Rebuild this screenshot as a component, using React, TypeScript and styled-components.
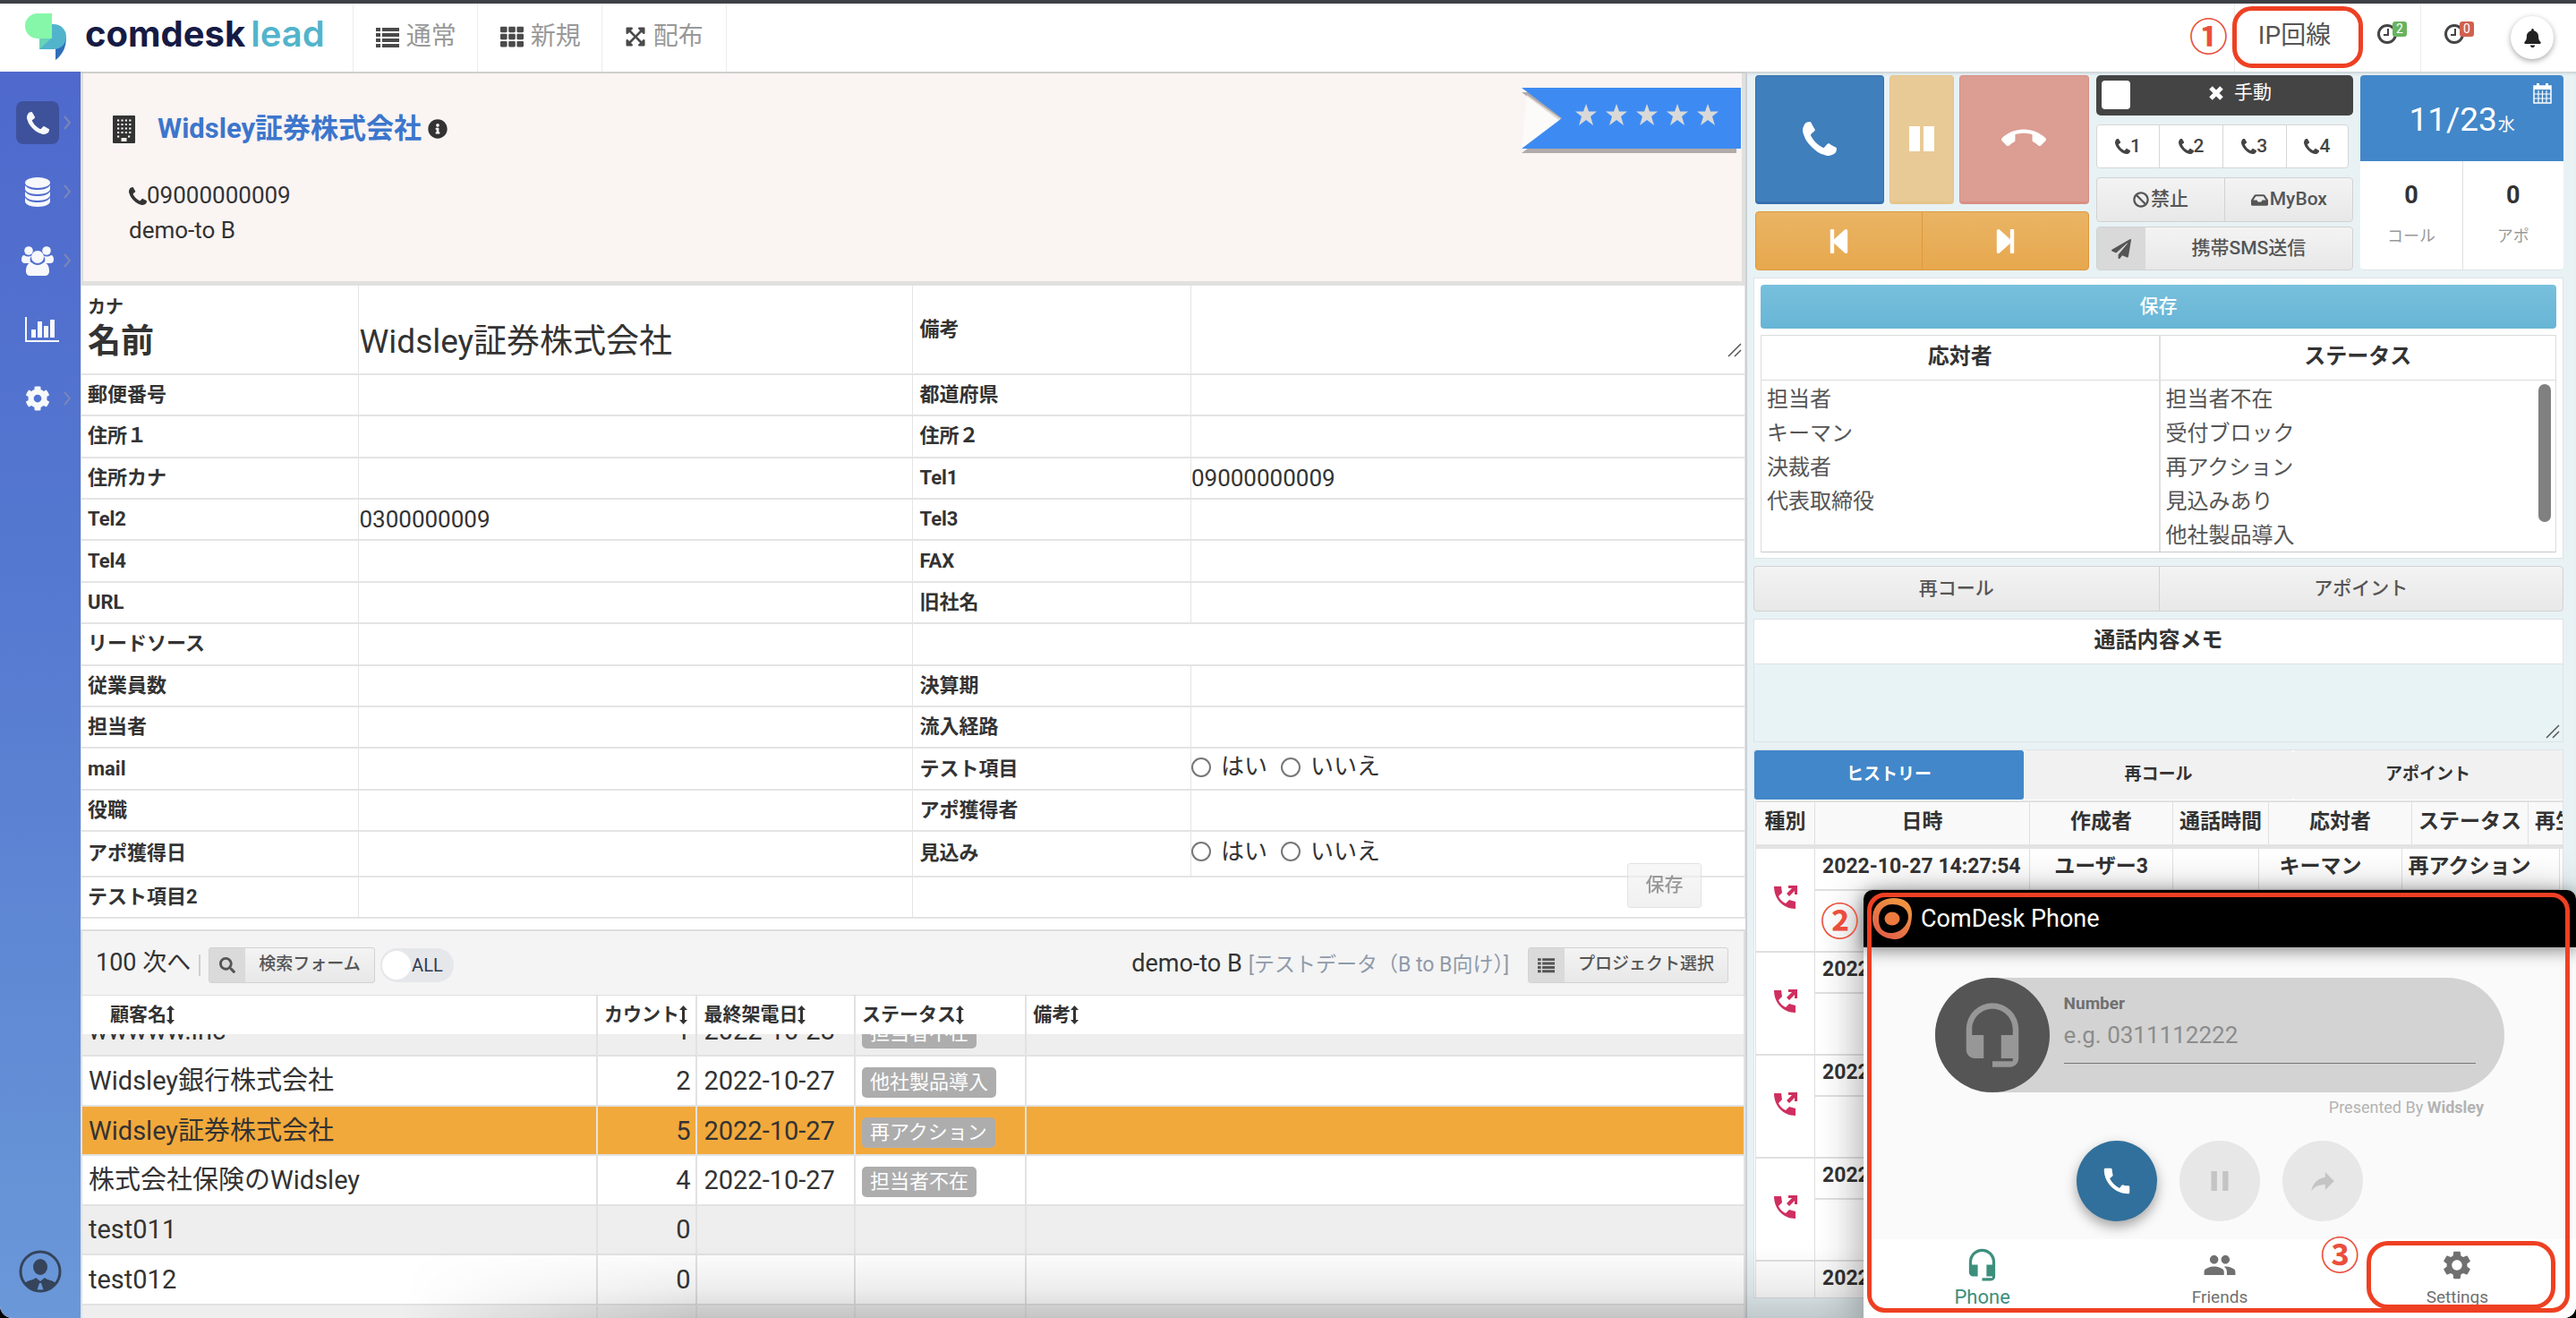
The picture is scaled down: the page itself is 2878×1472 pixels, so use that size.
import React from "react";
import styled, { createGlobalStyle, css } from "styled-components";
import {
  FaBan,
  FaBell,
  FaCog,
  FaExpandArrowsAlt,
  FaInbox,
  FaInfoCircle,
  FaPaperPlane,
  FaSearch,
  FaStepBackward,
  FaStepForward,
  FaTh,
} from "react-icons/fa";
import { MdCall, MdCallEnd, MdGroup, MdHeadsetMic, MdPause, MdSettings } from "react-icons/md";

const GlobalStyle = createGlobalStyle`
  *, *::before, *::after { box-sizing: border-box; }
  html, body { margin: 0; background: #000; }
  body {
    font-family: Roboto, "Noto Sans CJK JP", sans-serif;
    color: #333;
    font-size: 26px;
    line-height: 1.2;
  }
  button, input, select, textarea { font: inherit; color: inherit; margin: 0; border-radius: 0; }
  button { cursor: pointer; padding: 0; border: 0; background: none; }
  a { color: inherit; text-decoration: none; }
  svg { display: block; flex: none; }
`;

/* ---------- shell ---------- */

const Shell = styled.div`
  position: relative;
  display: grid;
  grid-template-rows: 80px minmax(0, 1fr);
  height: 100vh;
  overflow: hidden;
  background: #fff;
  border-radius: 0 0 14px 14px;
`;

const Body = styled.div`
  display: grid;
  grid-template-columns: 90px minmax(0, 465fr) minmax(0, 232fr);
  min-height: 0;
`;

const TopBar = styled.header`
  display: flex;
  align-items: stretch;
  border-top: 4px solid #3f3f46;
  background: #fff;
`;

const Brand = styled.a`
  display: flex;
  align-items: center;
  gap: 20px;
  padding: 0 31px 0 28px;
  border-right: 1px solid #ececec;
`;

const Wordmark = styled.span<{ $light?: boolean }>`
  font-family: Inter, sans-serif;
  font-weight: ${(p) => (p.$light ? 600 : 700)};
  font-size: 40px;
  line-height: 48px;
  color: ${(p) => (p.$light ? "#52b4cc" : "#161b45")};
  margin-bottom: 8px;
`;

const Words = styled.span`
  display: flex;
  gap: 6px;
`;

const TopLink = styled.a`
  display: flex;
  align-items: center;
  gap: 8px;
  width: 139px;
  padding: 0 0 2px 25px;
  border-right: 1px solid #ececec;
  font-size: 28px;
  color: #999;
  svg { color: #4a4a4a; }
`;

const Spacer = styled.div`
  flex: 1;
`;

const LineCell = styled.div`
  position: relative;
  display: flex;
  align-items: center;
  justify-content: center;
  width: 134px;
  padding-bottom: 4px;
  border-left: 1px solid #ececec;
  font-size: 28px;
  color: #555;
`;

const ClockCell = styled.button`
  display: flex;
  align-items: center;
  width: 75px;
  padding: 0 0 8px 26px;
  border-right: 1px solid #ececec;
  color: #444;
  &:last-of-type { border-right: 0; }
`;

const ClockIcon = styled.span`
  position: relative;
  display: block;
`;

const ClockBadge = styled.span<{ $color: string }>`
  position: absolute;
  left: 17px;
  top: -3px;
  width: 16px;
  height: 17px;
  border-radius: 3px;
  background: ${(p) => p.$color};
  color: #fff;
  font-size: 14px;
  line-height: 17px;
  text-align: center;
`;

const BellCell = styled.div`
  display: flex;
  align-items: center;
  padding: 0 25px 0 25px;
`;

const BellButton = styled.button`
  display: grid;
  place-items: center;
  width: 48px;
  height: 48px;
  border-radius: 50%;
  background: #fff;
  color: #222;
  box-shadow: 0 2px 6px rgba(0, 0, 0, 0.35);
`;

/* ---------- side navigation ---------- */

const Side = styled.nav`
  display: flex;
  flex-direction: column;
  padding: 33px 0 28px 18px;
  background: linear-gradient(#4f69cd, #5478d0 40%, #6a98d8);
  color: #f7f8fb;
`;

const SideLink = styled.a<{ $active?: boolean }>`
  display: flex;
  align-items: center;
  gap: 5px;
  height: 48px;
  margin-bottom: 29px;
  > span {
    display: grid;
    place-items: center;
    width: 48px;
    height: 48px;
    border-radius: 8px;
    background: ${(p) => (p.$active ? "#3e529c" : "transparent")};
  }
  > svg { color: #7c87b6; }
`;

const Profile = styled.a`
  margin-top: auto;
  padding-left: 3px;
`;

/* ---------- customer ---------- */

const Main = styled.main`
  display: flex;
  flex-direction: column;
  min-width: 0;
  min-height: 0;
  border-top: 2px solid #cdcfcb;
  background: #fff;
`;

const Customer = styled.section`
  position: relative;
  padding: 40px 0 0 33px;
  height: 237px;
  border: solid #e0e0de;
  border-width: 0 4px 5px 3px;
  background: #faf4f3;
`;

const CustomerTitle = styled.h1`
  display: flex;
  align-items: center;
  margin: 0;
  font-size: 31px;
  font-weight: 700;
  line-height: 44px;
  a { color: #3c76cc; margin: 0 7px 0 25px; }
`;

const CustomerLines = styled.div`
  padding: 33px 0 0 18px;
  font-size: 26px;
  line-height: 39px;
  div { display: flex; align-items: center; }
`;

const Ribbon = styled.div`
  position: absolute;
  top: 16px;
  right: 1px;
`;

const Stars = styled.div`
  position: absolute;
  left: 60px;
  top: 18px;
  display: flex;
  gap: 10px;
  color: #d9d9d9;
`;

/* ---------- form ---------- */

const FormWrap = styled.form`
  position: relative;
`;

const FormTable = styled.table`
  width: 100%;
  height: 707px;
  table-layout: fixed;
  border-collapse: collapse;
`;

const FormRow = styled.tr<{ $h: number }>`
  height: ${(p) => p.$h}px;
`;

const FormTh = styled.th`
  padding: 0 0 0 7px;
  border: solid #e4e4e4;
  border-width: 0 1px 2px 1px;
  text-align: left;
  font-size: 22px;
  font-weight: 700;
  line-height: 30px;
`;

const FormTd = styled.td`
  position: relative;
  padding: 0;
  border: solid #e4e4e4;
  border-width: 0 1px 2px 1px;
`;

const KanaLabel = styled.span`
  display: block;
  font-size: 20px;
  line-height: 28px;
`;

const NameLabel = styled.label`
  display: block;
  font-size: 37px;
  line-height: 50px;
`;

const Field = styled.input<{ $big?: boolean }>`
  display: block;
  width: 100%;
  height: ${(p) => (p.$big ? 60 : 36)}px;
  padding: 0;
  border: 0;
  background: transparent;
  outline: 0;
  font-size: ${(p) => (p.$big ? 37 : 26)}px;
  margin-top: ${(p) => (p.$big ? 20 : 0)}px;
`;

const NoteArea = styled.textarea`
  display: block;
  width: 100%;
  height: 60px;
  padding: 0;
  border: 0;
  background: transparent;
  resize: none;
  outline: 0;
`;

const Choices = styled.div`
  display: flex;
  align-items: center;
  gap: 13px;
  height: 38px;
  padding-bottom: 4px;
  label { display: flex; align-items: center; gap: 11px; }
  label + label { margin-left: 2px; }
  input {
    appearance: none;
    width: 22px;
    height: 22px;
    border: 2px solid #777;
    border-radius: 50%;
    background: #fff;
  }
`;

const Grip = styled.svg`
  position: absolute;
  right: 3px;
  bottom: 3px;
`;

const NoteGrip = styled(Grip)`
  bottom: 18px;
`;

const buttonFace = css`
  border: 1px solid #d2d2d2;
  background: linear-gradient(#f3f3f3, #e8e8e8);
  color: #555;
  font-weight: 500;
`;

const FormSave = styled.button`
  ${buttonFace}
  position: absolute;
  right: 49px;
  bottom: 12px;
  width: 83px;
  height: 50px;
  border-radius: 3px;
  font-size: 21px;
  opacity: 0.6;
`;

/* ---------- customer list ---------- */

const ListPanel = styled.section`
  display: flex;
  flex: 1;
  flex-direction: column;
  min-height: 0;
  margin-top: 12px;
  overflow: hidden;
`;

const ListTools = styled.div`
  display: flex;
  align-items: center;
  flex: none;
  height: 74px;
  padding: 4px 17px 0 15px;
  border: solid #dedede;
  border-width: 2px 2px 1px;
  background: #f4f4f4;
  font-size: 27px;
`;

const PageLinks = styled.span`
  padding-bottom: 4px;
`;

const Divider = styled.span`
  width: 2px;
  height: 24px;
  margin: 0 9px 0 9px;
  background: #cfcfcf;
`;

const ToolButton = styled.button`
  ${buttonFace}
  display: flex;
  align-items: stretch;
  height: 40px;
  border-radius: 3px;
  font-size: 19px;
  > span:first-child {
    display: grid;
    place-items: center;
    width: 40px;
    background: #dadada;
  }
  > span:last-child {
    align-self: center;
    padding: 0 15px;
  }
`;

const AllToggle = styled.label`
  position: relative;
  display: flex;
  align-items: center;
  justify-content: flex-end;
  width: 82px;
  height: 38px;
  margin-left: 6px;
  padding-right: 12px;
  border-radius: 19px;
  background: #e6e7ea;
  color: #2f3a52;
  font-size: 20px;
  input {
    appearance: none;
    position: absolute;
    left: 2px;
    top: 3px;
    width: 32px;
    height: 32px;
    border-radius: 50%;
    background: #fff;
  }
`;

const ProjectName = styled.span`
  padding-bottom: 2px;
  margin-right: 7px;
`;

const ProjectNote = styled.span`
  margin-right: 21px;
  font-size: 23px;
  color: #8f9aaa;
`;

const listTable = css`
  width: 100%;
  flex: none;
  table-layout: fixed;
  border-collapse: collapse;
  th, td { border: solid #e2e2e2; border-width: 0 2px 2px 2px; text-align: left; }
`;

const ListHeadTable = styled.table`
  ${listTable}
  position: relative;
  background: #fff;
  th { height: 43px; padding: 0 0 0 7px; border-bottom: 0; font-size: 21px; font-weight: 700; }
  th:first-child { padding-left: 31px; }
  th > span { display: flex; align-items: center; white-space: nowrap; }
`;

const ListScroll = styled.div`
  flex: 1;
  min-height: 0;
  overflow: hidden;
`;

const ListTable = styled.table`
  ${listTable}
  height: 389px;
  margin-top: -31px;
  font-size: 29px;
  tr { height: 55px; }
  td { padding: 0 6px 0 7px; white-space: nowrap; line-height: 40px; }
  td:nth-child(2) { text-align: right; }
`;

const ListRow = styled.tr<{ $tone: string }>`
  background: ${(p) => p.$tone};
`;

const StatusBadge = styled.span`
  display: inline-block;
  vertical-align: middle;
  height: 34px;
  padding: 0 9px;
  border-radius: 5px;
  background: #adadad;
  color: #fff;
  font-size: 22px;
  line-height: 34px;
`;

/* ---------- call panel ---------- */

const Panel = styled.aside`
  display: flex;
  flex-direction: column;
  gap: 8px;
  min-width: 0;
  min-height: 0;
  padding: 4px 14px 22px 7px;
  border-left: 2px solid #cbd1d7;
  background: #e8f2f5;
  box-shadow: inset 0 4px 4px -3px rgba(0, 0, 0, 0.2);
`;

const Controls = styled.section`
  display: grid;
  grid-template-columns: 373fr 288fr 227fr;
  gap: 8px;
  height: 218px;
  padding-left: 2px;
`;

const Column = styled.div<{ $gap: number }>`
  display: flex;
  flex-direction: column;
  gap: ${(p) => p.$gap}px;
  min-width: 0;
`;

const CallRow = styled.div`
  display: grid;
  grid-template-columns: 2fr 1fr 2fr;
  gap: 6px;
  height: 144px;
`;

const CallButton = styled.button<{ $bg: string; $edge: string }>`
  display: grid;
  place-items: center;
  border-radius: 4px;
  border: 1px solid ${(p) => p.$edge};
  border-bottom-width: 3px;
  background: ${(p) => p.$bg};
  color: #fff;
`;

const Segments = styled.div<{ $h: number; $inset?: boolean }>`
  display: grid;
  grid-auto-flow: column;
  grid-auto-columns: minmax(0, 1fr);
  height: ${(p) => p.$h}px;
  margin-right: ${(p) => (p.$inset ? 5 : 0)}px;
  button { margin-right: -1px; }
  button:last-child { margin-right: 0; border-radius: 0 4px 4px 0; }
  button:first-child { border-radius: 4px 0 0 4px; }
`;

const StepButton = styled.button`
  display: grid;
  place-items: center;
  border: 1px solid #e0983c;
  background: linear-gradient(#e9b464, #e7a84e);
  color: #fff;
`;

const ManualSwitch = styled.label`
  position: relative;
  display: flex;
  align-items: center;
  justify-content: center;
  gap: 12px;
  height: 45px;
  padding: 0 0 6px 35px;
  border-radius: 5px;
  background: #444;
  color: #fff;
  font-size: 21px;
  input {
    appearance: none;
    position: absolute;
    left: 6px;
    top: 6px;
    width: 32px;
    height: 32px;
    border-radius: 4px;
    background: #fff;
  }
`;

const LineButton = styled.button`
  display: flex;
  align-items: center;
  justify-content: center;
  border: 1px solid #d6d6d6;
  background: #fff;
  color: #444;
  font-size: 21px;
  font-weight: 500;
`;

const GreyButton = styled.button`
  ${buttonFace}
  display: flex;
  align-items: center;
  justify-content: center;
  gap: 2px;
  font-size: 21px;
`;

const SmsButton = styled.button`
  ${buttonFace}
  display: flex;
  height: 49px;
  border-radius: 4px;
  font-size: 21px;
  > span { display: grid; place-items: center; height: 100%; }
  > span:first-child { width: 54px; background: #d9d9d9; }
  > span:last-child { flex: 1; }
`;

const DateCard = styled.div`
  display: grid;
  grid-template-rows: 96px 1fr;
  overflow: hidden;
  border-radius: 4px;
  background: #fff;
  border-bottom: 1px solid #dde3e6;
`;

const DateHead = styled.div`
  position: relative;
  display: flex;
  align-items: baseline;
  justify-content: center;
  padding: 28px 0 0 0;
  background: #4287c9;
  color: #fff;
  font-size: 37px;
  line-height: 44px;
  small { font-size: 19px; margin-left: 1px; }
  svg { position: absolute; right: 13px; top: 9px; }
`;

const Counters = styled.dl`
  display: grid;
  grid-template-columns: 1fr 1fr;
  margin: 0;
  text-align: center;
  div { display: flex; flex-direction: column-reverse; justify-content: flex-end; gap: 15px; padding-top: 20px; }
  div + div { border-left: 1px solid #e0e0e0; }
  dd { margin: 0; font-size: 27px; line-height: 36px; font-weight: 700; }
  dt { font-size: 18px; line-height: 26px; color: #999; font-weight: 400; }
`;

const Card = styled.section`
  border: 1px solid #dce3e6;
  background: #fff;
`;

const StatusCard = styled(Card)`
  padding: 7px 7px 6px;
`;

const SaveButton = styled.button`
  display: block;
  width: 100%;
  height: 49px;
  margin-bottom: 7px;
  border-radius: 4px;
  background: linear-gradient(#78c0dc, #67b5d6);
  color: #fff;
  font-size: 21px;
  font-weight: 500;
`;

const Lists = styled.div`
  display: grid;
  grid-template-columns: 1fr 1fr;
  border: 1px solid #dcdcdc;
  border-bottom-color: #c8c8c8;
`;

const ListBox = styled.div`
  position: relative;
  & + & { border-left: 2px solid #dedede; }
  label {
    display: block;
    height: 50px;
    border-bottom: 1px solid #dcdcdc;
    text-align: center;
    font-size: 24px;
    font-weight: 700;
    line-height: 46px;
  }
  select {
    display: block;
    appearance: none;
    width: 100%;
    height: 191px;
    padding: 1px 0 0;
    border: 0;
    outline: 0;
    background: #fff;
    overflow: hidden;
    color: #555;
    font-size: 24px;
  }
  option { height: 38px; min-height: 38px; padding: 0 6px; line-height: 38px; }
`;

const Thumb = styled.span`
  position: absolute;
  right: 5px;
  top: 54px;
  width: 14px;
  height: 154px;
  border-radius: 7px;
  background: #808080;
`;

const MemoCard = styled(Card)`
  position: relative;
  label {
    display: block;
    height: 50px;
    border-bottom: 1px solid #dce3e6;
    text-align: center;
    font-size: 24px;
    font-weight: 700;
    line-height: 46px;
  }
  textarea {
    display: block;
    width: 100%;
    height: 86px;
    border: 0;
    outline: 0;
    resize: none;
    background: #e8f3f6;
  }
`;

const HistoryCard = styled(Card)`
  flex: 1;
  min-height: 0;
  overflow: hidden;
`;

const Tabs = styled.div`
  display: grid;
  grid-template-columns: repeat(3, 1fr);
  height: 56px;
  padding-bottom: 1px;
`;

const Tab = styled.button<{ $active?: boolean }>`
  border-radius: 3px;
  background: ${(p) => (p.$active ? "#4287c9" : "#f1f1f1")};
  color: ${(p) => (p.$active ? "#fff" : "#333")};
  font-size: 19px;
  font-weight: 700;
`;

const historyTable = css`
  table-layout: fixed;
  border-collapse: collapse;
  margin-left: 1px;
  th, td { padding: 0; border: 1px solid #e0e0e0; font-size: 23px; font-weight: 700; text-align: center; white-space: nowrap; }
`;

const HistoryHead = styled.table`
  ${historyTable}
  min-width: 946px;
  width: 100%;
  th { height: 50px; background: #f9f9f9; border-top-width: 2px; border-bottom: 5px solid #e3e3e3; padding-bottom: 3px; }
  th:last-child { text-align: left; padding-left: 7px; }
`;

const HistoryBody = styled.table`
  ${historyTable}
  width: calc(100% - 4px);
  td { border-top-width: 0; border-bottom-width: 2px; height: 69px; }
  tr:nth-child(odd) td { height: 46px; padding-bottom: 5px; }
  td[rowspan] > svg { margin: 0 auto; color: #cf2f60; }
  td:last-child:not([colspan]) { padding-right: 25px; }
  td:nth-last-child(2):not([rowspan]) { padding-right: 22px; }
  tr:last-child td { height: 300px; }
`;

const DateCell = styled.td`
  && { text-align: left; padding-left: 8px; }
`;

/* ---------- softphone window ---------- */

const PhoneWindow = styled.section`
  position: absolute;
  right: 0;
  bottom: 0;
  display: flex;
  flex-direction: column;
  width: 796px;
  height: 478px;
  border-radius: 10px 10px 0 0;
  background: #fafafa;
  box-shadow: 0 10px 50px rgba(0, 0, 0, 0.4);
`;

const PhoneBar = styled.header`
  position: relative;
  display: flex;
  align-items: center;
  gap: 9px;
  height: 64px;
  padding-left: 9px;
  border-radius: 10px 10px 0 0;
  background: #000;
  color: #fff;
  font-size: 27px;
  box-shadow: 0 4px 18px rgba(0, 0, 0, 0.45);
`;

const PhoneBody = styled.div`
  display: flex;
  flex: 1;
  flex-direction: column;
  align-items: center;
  padding-top: 34px;
`;

const DialPill = styled.div`
  display: flex;
  align-items: center;
  width: 80%;
  height: 128px;
  border-radius: 64px;
  background: #d3d3d3;
`;

const DialIcon = styled.span`
  display: grid;
  place-items: center;
  width: 128px;
  height: 128px;
  border-radius: 50%;
  background: #555;
  color: #979797;
`;

const DialField = styled.div`
  flex: 1;
  margin: 0 32px 16px 16px;
  label { display: block; font-size: 19px; line-height: 24px; font-weight: 700; color: #707070; }
  input {
    display: block;
    width: 100%;
    height: 55px;
    padding: 0 0 8px;
    border: 0;
    border-bottom: 1px solid #777;
    outline: 0;
    background: transparent;
    font-size: 26px;
    line-height: 32px;
  }
  input::placeholder { color: #8c8c8c; opacity: 1; }
`;

const Presented = styled.p`
  align-self: stretch;
  margin: 0 103px 0 0;
  text-align: right;
  font-size: 18px;
  line-height: 34px;
  height: 54px;
  color: #b3b3b3;
`;

const RoundRow = styled.div`
  display: flex;
  gap: 25px;
`;

const RoundButton = styled.button<{ $main?: boolean }>`
  display: grid;
  place-items: center;
  width: 90px;
  height: 90px;
  border-radius: 50%;
  background: ${(p) => (p.$main ? "#31709c" : "#e7e7e7")};
  color: ${(p) => (p.$main ? "#fff" : "#c4c4c4")};
  box-shadow: ${(p) => (p.$main ? "0 6px 14px rgba(0, 0, 0, 0.35)" : "none")};
`;

const PhoneNav = styled.nav`
  display: grid;
  grid-template-columns: repeat(3, 1fr);
  height: 88px;
  background: #fff;
`;

const PhoneNavLink = styled.a<{ $active?: boolean }>`
  position: relative;
  display: flex;
  flex-direction: column;
  align-items: center;
  justify-content: flex-end;
  gap: 5px;
  padding-bottom: 11px;
  color: ${(p) => (p.$active ? "#3d8f7d" : "#707070")};
  font-size: ${(p) => (p.$active ? 22 : 19)}px;
  line-height: 24px;
`;

/* ---------- callouts ---------- */

const Outline = styled.span<{ $inset: string; $radius: number }>`
  position: absolute;
  inset: ${(p) => p.$inset};
  border: 5px solid #ee4023;
  border-radius: ${(p) => p.$radius}px;
  pointer-events: none;
`;

const Step = styled.span<{ $left: number; $top: number }>`
  position: absolute;
  left: ${(p) => p.$left}px;
  top: ${(p) => p.$top}px;
  color: #ea4f3c;
  font-family: "Noto Sans CJK JP", sans-serif;
  font-size: 43px;
  font-weight: 700;
  line-height: 44px;
`;

const FloorShade = styled.div`
  position: absolute;
  left: 450px;
  right: 0;
  bottom: 0;
  height: 80px;
  background: linear-gradient(to top, rgba(0, 0, 0, 0.17), rgba(0, 0, 0, 0.07) 40%, transparent);
  mask-image: linear-gradient(to right, transparent, #000 320px);
  pointer-events: none;
`;

/* ---------- drawings ---------- */

const Handset = ({ size }: { size: number }) => (
  <svg width={size} height={size} viewBox="0 128 1408 1408" fill="currentColor">
    <path d="M1408 1240q0 27-10 70.5t-21 68.5q-21 50-122 106-94 51-186 51-27 0-53-3.5t-57.5-12.5-47-14.5-55.5-20.5-49-18q-98-35-175-83-127-79-264-216t-216-264q-48-77-83-175-3-9-18-49t-20.5-55.5-14.5-47-12.5-57.5-3.5-53q0-92 51-186 56-101 106-122 25-11 68.5-21t70.5-10q14 0 21 3 18 6 53 76 11 19 30 54t35 63.5 31 53.5q3 4 17.5 25t21.5 35.5 7 28.5q0 20-28.5 50t-62 55-62 53-28.5 46q0 9 5 22.5t8.5 20.5 14 24 11.5 19q76 137 174 235t235 174q2 1 19 11.5t24 14 20.5 8.5 22.5 5q18 0 46-28.5t53-62 55-62 50-28.5q14 0 28.5 7t35.5 21.5 25 17.5q25 15 53.5 31t63.5 35 54 30q70 35 76 53 3 7 3 21z" />
  </svg>
);

const LogoMark = () => (
  <svg width="47" height="54" viewBox="0 0 47 54">
    <path d="M34 52V30l12-4c0 12-4 20-12 26z" fill="#2f6fb9" />
    <path d="M16 12h16a14 14 0 0 1 0 28H16z" fill="#52b4cc" />
    <path d="M16 40V27h14z" fill="#69d3b8" />
    <path d="M30 0v28H14A14 14 0 0 1 14 0z" fill="#86f7a9" />
  </svg>
);

const Chevron = () => (
  <svg width="8" height="16" viewBox="0 0 8 16" fill="none" stroke="currentColor" strokeWidth="2">
    <path d="M1 1l6 7-6 7" />
  </svg>
);

const Discs = () => (
  <svg width="28" height="33" viewBox="0 0 28 33" fill="currentColor">
    <ellipse cx="14" cy="6" rx="14" ry="6" />
    <path d="M0 9c3 4 8 5 14 5s11-1 14-5v4c0 3-6 6-14 6S0 16 0 13z" />
    <path d="M0 16c3 4 8 5 14 5s11-1 14-5v4c0 3-6 6-14 6S0 23 0 20z" />
    <path d="M0 23c3 4 8 5 14 5s11-1 14-5v4c0 3-6 6-14 6S0 30 0 27z" />
  </svg>
);

const People = () => (
  <svg width="36" height="33" viewBox="0 0 36 33" fill="currentColor">
    <circle cx="8" cy="5" r="4.8" />
    <circle cx="28" cy="5" r="4.8" />
    <path d="M3 10c3 2 6 2 9 0-3 3-3 6-1 9H4c-3 0-4-2-4-4 0-3 1-5 3-5zM33 10c-3 2-6 2-9 0 3 3 3 6 1 9h7c3 0 4-2 4-4 0-3-1-5-3-5z" />
    <circle cx="18" cy="12" r="7" />
    <path d="M11 18c4 4 10 4 14 0 5 1 6 6 6 10 0 3-2 5-5 5H10c-3 0-5-2-5-5 0-4 1-9 6-10z" />
  </svg>
);

const Bars = () => (
  <svg width="48" height="28" viewBox="-10 0 48 28" fill="currentColor">
    <path d="M0 0h2v26h36v2H0zM7 14h5v9H7zM14 5h5v18h-5zM21 10h5v13h-5zM28 3h5v20h-5z" />
  </svg>
);

const Avatar = () => (
  <svg width="48" height="48" viewBox="0 0 48 48">
    <circle cx="24" cy="24" r="22" fill="none" stroke="#35445a" strokeWidth="3" />
    <ellipse cx="24" cy="19" rx="8" ry="9" fill="#35445a" />
    <path d="M7 37c4-4 9-3 12-6l5 4 5-4c3 3 8 2 12 6-4 5-8 7-13 9l-3-9h-2l-3 9C15 44 11 42 7 37z" fill="#35445a" />
  </svg>
);

const Office = () => (
  <svg width="25" height="31" viewBox="0 0 25 31">
    <rect width="25" height="31" rx="1" fill="#333" />
    <path d="M5 5.5h16M5 10h16M5 14.5h16M5 19h16M5 23.5h4M17 23.5h4" stroke="#faf4f3" strokeWidth="2" strokeDasharray="2.2 2.2" />
    <rect x="9.5" y="25" width="6" height="4" fill="#faf4f3" />
  </svg>
);

const Rows = ({ size }: { size: number }) => (
  <svg width={size} height={size} viewBox="0 0 26 26" fill="currentColor">
    <path d="M0 3h5v4H0zM7 3h19v4H7zM0 9h5v4H0zM7 9h19v4H7zM0 15h5v4H0zM7 15h19v4H7zM0 21h5v4H0zM7 21h19v4H7z" />
  </svg>
);

const SortArrow = () => (
  <svg width="9" height="21" viewBox="0 0 9 21" fill="currentColor">
    <path d="M4.5 0L9 5H6v11h3l-4.5 5L0 16h3V5H0z" />
  </svg>
);

const Cross = () => (
  <svg width="16" height="16" viewBox="0 0 16 16" stroke="currentColor" strokeWidth="5">
    <path d="M2 2l12 12M14 2L2 14" />
  </svg>
);

const PauseBars = () => (
  <svg width="28" height="28" viewBox="0 0 28 28" fill="currentColor">
    <path d="M0 0h12v28H0zM16 0h12v28H16z" />
  </svg>
);

const Star = () => (
  <svg width="24" height="24" viewBox="0 0 24 24" fill="currentColor">
    <path d="M12 0l3 8.5h9l-7 5.5 3 10-8-6-8 6 3-10-7-5.5h9z" />
  </svg>
);

const Clock = () => (
  <svg width="22" height="22" viewBox="0 0 22 22" fill="none" stroke="currentColor">
    <circle cx="11" cy="11" r="9.5" strokeWidth="3" />
    <path d="M12 5v7H7" strokeWidth="2" />
  </svg>
);

const CalendarIcon = () => (
  <svg width="21" height="23" viewBox="0 0 21 23">
    <path d="M1 3h19v19H1z" fill="none" stroke="#fff" strokeWidth="1.5" />
    <path d="M1 3h19v4H1zM4 0h3v6H4zM14 0h3v6h-3z" fill="#fff" />
    <path d="M1 12h19M1 17h19M6 8v14M10.5 8v14M15 8v14" stroke="#fff" strokeWidth="1.2" />
  </svg>
);

const OutgoingCall = () => (
  <svg width="26" height="26" viewBox="0 0 26 26" fill="currentColor">
    <path d="M0 1h8l1 7-4 4c2 4 4 6 8 8l4-4 7 2v8C10 26 0 15 0 1z" />
    <path d="M16 0h10v10h-3V6l-6 6-3-3 6-6h-4z" />
  </svg>
);

const ForwardArrow = () => (
  <svg width="38" height="34" viewBox="0 0 24 24" fill="currentColor">
    <path d="M14 9V5l7 7-7 7v-4.1c-5 0-8.5 1.6-11 5.1 1-5 4-10 11-11z" />
  </svg>
);

const PhoneLogo = () => (
  <svg width="46" height="48" viewBox="0 0 46 48">
    <defs>
      <linearGradient id="ember" x1="0" y1="1" x2="0.6" y2="0">
        <stop offset="0" stopColor="#e2564a" />
        <stop offset="1" stopColor="#ee9440" />
      </linearGradient>
    </defs>
    <path d="M25 1c12 0 20 6 20 18 0 14-6 28-18 28C13 47 1 38 1 24 1 9 11 1 25 1z" fill="url(#ember)" />
    <path d="M23 8c11 0 18 6 18 14s-8 18-19 18S8 33 8 24 14 8 23 8z" fill="#000" />
    <ellipse cx="23" cy="24" rx="8.5" ry="7.5" fill="#ee7a3e" />
  </svg>
);

const gripLines = <path d="M1 15L15 1M8 15l7-7" stroke="#555" strokeWidth="1.5" />;

const RibbonShape = () => (
  <svg width="245" height="73" viewBox="0 0 245 73">
    <path d="M0 5h240v68H0l45-34z" fill="#b1aaa8" />
    <path d="M0 68L44 35 6 8z" fill="#fff" opacity="0.6" />
    <path d="M0 0h245v68H0l45-34z" fill="#3d8bf2" />
  </svg>
);

/* ---------- data ---------- */

type FormLine = [string, string, string | null, string | "radio", number];

const formLines: FormLine[] = [
  ["郵便番号", "", "都道府県", "", 46],
  ["住所１", "", "住所２", "", 46],
  ["住所カナ", "", "Tel1", "09000000009", 46],
  ["Tel2", "0300000009", "Tel3", "", 46],
  ["Tel4", "", "FAX", "", 46],
  ["URL", "", "旧社名", "", 46],
  ["リードソース", "", null, "", 46],
  ["従業員数", "", "決算期", "", 46],
  ["担当者", "", "流入経路", "", 46],
  ["mail", "", "テスト項目", "radio", 46],
  ["役職", "", "アポ獲得者", "", 46],
  ["アポ獲得日", "", "見込み", "radio", 50],
  ["テスト項目2", "", null, "", 46],
];

const listRows = [
  { name: "wwwww.inc", count: "1", date: "2022-10-28", status: "担当者不在", tone: "#eee" },
  { name: "Widsley銀行株式会社", count: "2", date: "2022-10-27", status: "他社製品導入", tone: "#fff" },
  { name: "Widsley証券株式会社", count: "5", date: "2022-10-27", status: "再アクション", tone: "#f2a93b" },
  { name: "株式会社保険のWidsley", count: "4", date: "2022-10-27", status: "担当者不在", tone: "#fff" },
  { name: "test011", count: "0", date: "", status: "", tone: "#eee" },
  { name: "test012", count: "0", date: "", status: "", tone: "#fff" },
  { name: "", count: "", date: "", status: "", tone: "#eee" },
];

const listHeads = ["顧客名", "カウント", "最終架電日", "ステータス", "備考"];
const historyHeads = ["種別", "日時", "作成者", "通話時間", "応対者", "ステータス", "再生"];

const ListCols = () => (
  <colgroup>
    <col width="31%" />
    <col width="6%" />
    <col width="9.5%" />
    <col width="10.3%" />
    <col />
  </colgroup>
);

const YesNo = ({ name }: { name: string }) => (
  <Choices role="radiogroup" aria-label={name}>
    <label><input type="radio" name={name} />はい</label>
    <label><input type="radio" name={name} />いいえ</label>
  </Choices>
);

/* ---------- page parts ---------- */

const CustomerForm = () => (
  <FormWrap>
    <FormTable>
      <colgroup>
        <col width="16.7%" />
        <col width="33.3%" />
        <col width="16.7%" />
        <col />
      </colgroup>
      <tbody>
        <FormRow $h={98}>
          <FormTh>
            <KanaLabel>カナ</KanaLabel>
            <NameLabel htmlFor="name">名前</NameLabel>
          </FormTh>
          <FormTd><Field id="name" $big defaultValue="Widsley証券株式会社" /></FormTd>
          <FormTh><label htmlFor="note">備考</label></FormTh>
          <FormTd>
            <NoteArea id="note" />
            <NoteGrip width="16" height="16" viewBox="0 0 16 16">{gripLines}</NoteGrip>
          </FormTd>
        </FormRow>
        {formLines.map(([left, leftValue, right, rightValue, height]) => (
          <FormRow key={left} $h={height}>
            <FormTh><label htmlFor={left}>{left}</label></FormTh>
            <FormTd><Field id={left} defaultValue={leftValue} /></FormTd>
            {right === null ? (
              <FormTd colSpan={2} />
            ) : (
              <>
                <FormTh>{rightValue === "radio" ? right : <label htmlFor={right}>{right}</label>}</FormTh>
                <FormTd>
                  {rightValue === "radio" ? <YesNo name={right} /> : <Field id={right} defaultValue={rightValue} />}
                </FormTd>
              </>
            )}
          </FormRow>
        ))}
      </tbody>
    </FormTable>
    <FormSave type="button">保存</FormSave>
  </FormWrap>
);

const CustomerList = () => (
  <ListPanel>
    <ListTools>
      <PageLinks>100 <a href="#next">次へ</a></PageLinks>
      <Divider />
      <ToolButton type="button">
        <span><FaSearch size={18} /></span>
        <span>検索フォーム</span>
      </ToolButton>
      <AllToggle><input type="checkbox" />ALL</AllToggle>
      <Spacer />
      <ProjectName>demo-to B</ProjectName>
      <ProjectNote>[テストデータ（B to B向け）]</ProjectNote>
      <ToolButton type="button">
        <span><Rows size={19} /></span>
        <span>プロジェクト選択</span>
      </ToolButton>
    </ListTools>
    <ListHeadTable>
      <ListCols />
      <thead>
        <tr>
          {listHeads.map((head) => (
            <th key={head}><span>{head}<SortArrow /></span></th>
          ))}
        </tr>
      </thead>
    </ListHeadTable>
    <ListScroll>
      <ListTable>
        <ListCols />
        <tbody>
          {listRows.map((row, index) => (
            <ListRow key={index} $tone={row.tone}>
              <td>{row.name}</td>
              <td>{row.count}</td>
              <td>{row.date}</td>
              <td>{row.status && <StatusBadge>{row.status}</StatusBadge>}</td>
              <td />
            </ListRow>
          ))}
        </tbody>
      </ListTable>
    </ListScroll>
  </ListPanel>
);

const CallControls = () => (
  <Controls>
    <Column $gap={8}>
      <CallRow>
        <CallButton $bg="#3f7fbc" $edge="#3570ad" aria-label="発信"><Handset size={38} /></CallButton>
        <CallButton $bg="#e8ca96" $edge="#e6c48a" aria-label="保留"><PauseBars /></CallButton>
        <CallButton $bg="#dc9d93" $edge="#d98f85" aria-label="切断"><MdCallEnd size={50} /></CallButton>
      </CallRow>
      <Segments $h={66}>
        <StepButton aria-label="前へ"><FaStepBackward size={31} /></StepButton>
        <StepButton aria-label="次へ"><FaStepForward size={31} /></StepButton>
      </Segments>
    </Column>
    <Column $gap={10}>
      <ManualSwitch>
        <input type="checkbox" />
        <Cross />
        手動
      </ManualSwitch>
      <Segments $h={49} $inset>
        {[1, 2, 3, 4].map((line) => (
          <LineButton key={line}><Handset size={17} />{line}</LineButton>
        ))}
      </Segments>
      <Column $gap={5}>
        <Segments $h={50}>
          <GreyButton><FaBan size={18} />禁止</GreyButton>
          <GreyButton><FaInbox size={19} />MyBox</GreyButton>
        </Segments>
        <SmsButton>
          <span><FaPaperPlane size={22} /></span>
          <span>携帯SMS送信</span>
        </SmsButton>
      </Column>
    </Column>
    <DateCard>
      <DateHead>11/23<small>水</small><CalendarIcon /></DateHead>
      <Counters>
        <div><dt>コール</dt><dd>0</dd></div>
        <div><dt>アポ</dt><dd>0</dd></div>
      </Counters>
    </DateCard>
  </Controls>
);

const History = () => (
  <HistoryCard>
    <Tabs role="tablist">
      <Tab role="tab" $active>ヒストリー</Tab>
      <Tab role="tab">再コール</Tab>
      <Tab role="tab">アポイント</Tab>
    </Tabs>
    <HistoryHead>
      <colgroup>
        {[66, 240, 160, 107, 160, 130, 83].map((width, index) => (
          <col key={index} width={width} />
        ))}
      </colgroup>
      <thead>
        <tr>{historyHeads.map((head) => <th key={head}>{head}</th>)}</tr>
      </thead>
    </HistoryHead>
    <HistoryBody>
      <colgroup>
        {[66, 240, 160, 96, 160, 176].map((width, index) => (
          <col key={index} width={width} />
        ))}
      </colgroup>
      <tbody>
        <tr>
          <td rowSpan={2}><OutgoingCall /></td>
          <DateCell>2022-10-27 14:27:54</DateCell>
          <td>ユーザー3</td>
          <td />
          <td>キーマン</td>
          <td>再アクション</td>
        </tr>
        <tr><td colSpan={5} /></tr>
        {[2, 3, 4].map((id) => (
          <React.Fragment key={id}>
            <tr>
              <td rowSpan={2}><OutgoingCall /></td>
              <DateCell>2022-10-27</DateCell>
              <td /><td /><td /><td />
            </tr>
            <tr><td colSpan={5} /></tr>
          </React.Fragment>
        ))}
        <tr>
          <td rowSpan={2} />
          <DateCell>2022-10-27</DateCell>
          <td /><td /><td /><td />
        </tr>
        <tr><td colSpan={5} /></tr>
      </tbody>
    </HistoryBody>
  </HistoryCard>
);

const SoftPhone = () => (
  <PhoneWindow>
    <PhoneBar><PhoneLogo />ComDesk Phone</PhoneBar>
    <PhoneBody>
      <DialPill>
        <DialIcon><MdHeadsetMic size={78} /></DialIcon>
        <DialField>
          <label htmlFor="number">Number</label>
          <input id="number" placeholder="e.g. 0311112222" />
        </DialField>
      </DialPill>
      <Presented>Presented By <b>Widsley</b></Presented>
      <RoundRow>
        <RoundButton $main aria-label="Call"><MdCall size={38} /></RoundButton>
        <RoundButton aria-label="Hold"><MdPause size={38} /></RoundButton>
        <RoundButton aria-label="Transfer"><ForwardArrow /></RoundButton>
      </RoundRow>
    </PhoneBody>
    <PhoneNav>
      <PhoneNavLink href="#phone" $active><MdHeadsetMic size={39} />Phone</PhoneNavLink>
      <PhoneNavLink href="#friends"><MdGroup size={38} />Friends</PhoneNavLink>
      <PhoneNavLink href="#settings">
        <MdSettings size={38} />Settings
        <Outline $inset="2px 23px 10px 31px" $radius={24} />
        <Step $left={-20} $top={-7}>③</Step>
      </PhoneNavLink>
    </PhoneNav>
    <Outline $inset="3px 7px 6px 4px" $radius={20} />
    <Step $left={-48} $top={10}>②</Step>
  </PhoneWindow>
);

export default function App() {
  return (
    <Shell>
      <GlobalStyle />
      <TopBar>
        <Brand href="#home">
          <LogoMark />
          <Words>
            <Wordmark>comdesk</Wordmark>
            <Wordmark $light>lead</Wordmark>
          </Words>
        </Brand>
        <TopLink href="#normal"><Rows size={26} />通常</TopLink>
        <TopLink href="#new"><FaTh size={26} />新規</TopLink>
        <TopLink href="#deal"><FaExpandArrowsAlt size={24} />配布</TopLink>
        <Spacer />
        <LineCell>
          IP回線
          <Outline $inset="3px -10px 4px -3px" $radius={22} />
          <Step $left={-51} $top={12}>①</Step>
        </LineCell>
        <ClockCell aria-label="再コール">
          <ClockIcon><Clock /><ClockBadge $color="#68b35f">2</ClockBadge></ClockIcon>
        </ClockCell>
        <ClockCell aria-label="アポ">
          <ClockIcon><Clock /><ClockBadge $color="#d0604f">0</ClockBadge></ClockIcon>
        </ClockCell>
        <BellCell>
          <BellButton aria-label="通知"><FaBell size={21} /></BellButton>
        </BellCell>
      </TopBar>
      <Body>
        <Side>
          <SideLink href="#call" $active><span><Handset size={25} /></span><Chevron /></SideLink>
          <SideLink href="#data"><span><Discs /></span><Chevron /></SideLink>
          <SideLink href="#people"><span><People /></span><Chevron /></SideLink>
          <SideLink href="#report"><span><Bars /></span></SideLink>
          <SideLink href="#config"><span><FaCog size={28} /></span><Chevron /></SideLink>
          <Profile href="#profile" aria-label="プロフィール"><Avatar /></Profile>
        </Side>
        <Main>
          <Customer>
            <CustomerTitle>
              <Office />
              <a href="#customer">Widsley証券株式会社</a>
              <FaInfoCircle size={22} />
            </CustomerTitle>
            <CustomerLines>
              <div><Handset size={20} />09000000009</div>
              <div>demo-to B</div>
            </CustomerLines>
            <Ribbon>
              <RibbonShape />
              <Stars>{[1, 2, 3, 4, 5].map((n) => <Star key={n} />)}</Stars>
            </Ribbon>
          </Customer>
          <CustomerForm />
          <CustomerList />
        </Main>
        <Panel>
          <CallControls />
          <StatusCard>
            <SaveButton>保存</SaveButton>
            <Lists>
              <ListBox>
                <label htmlFor="contact">応対者</label>
                <select id="contact" size={5}>
                  {["担当者", "キーマン", "決裁者", "代表取締役"].map((o) => <option key={o}>{o}</option>)}
                </select>
              </ListBox>
              <ListBox>
                <label htmlFor="status">ステータス</label>
                <select id="status" size={5}>
                  {["担当者不在", "受付ブロック", "再アクション", "見込みあり", "他社製品導入"].map((o) => <option key={o}>{o}</option>)}
                </select>
                <Thumb />
              </ListBox>
            </Lists>
          </StatusCard>
          <Segments $h={51}>
            <GreyButton>再コール</GreyButton>
            <GreyButton>アポイント</GreyButton>
          </Segments>
          <MemoCard>
            <label htmlFor="memo">通話内容メモ</label>
            <textarea id="memo" />
            <Grip width="16" height="16" viewBox="0 0 16 16">{gripLines}</Grip>
          </MemoCard>
          <History />
        </Panel>
      </Body>
      <FloorShade />
      <SoftPhone />
    </Shell>
  );
}
